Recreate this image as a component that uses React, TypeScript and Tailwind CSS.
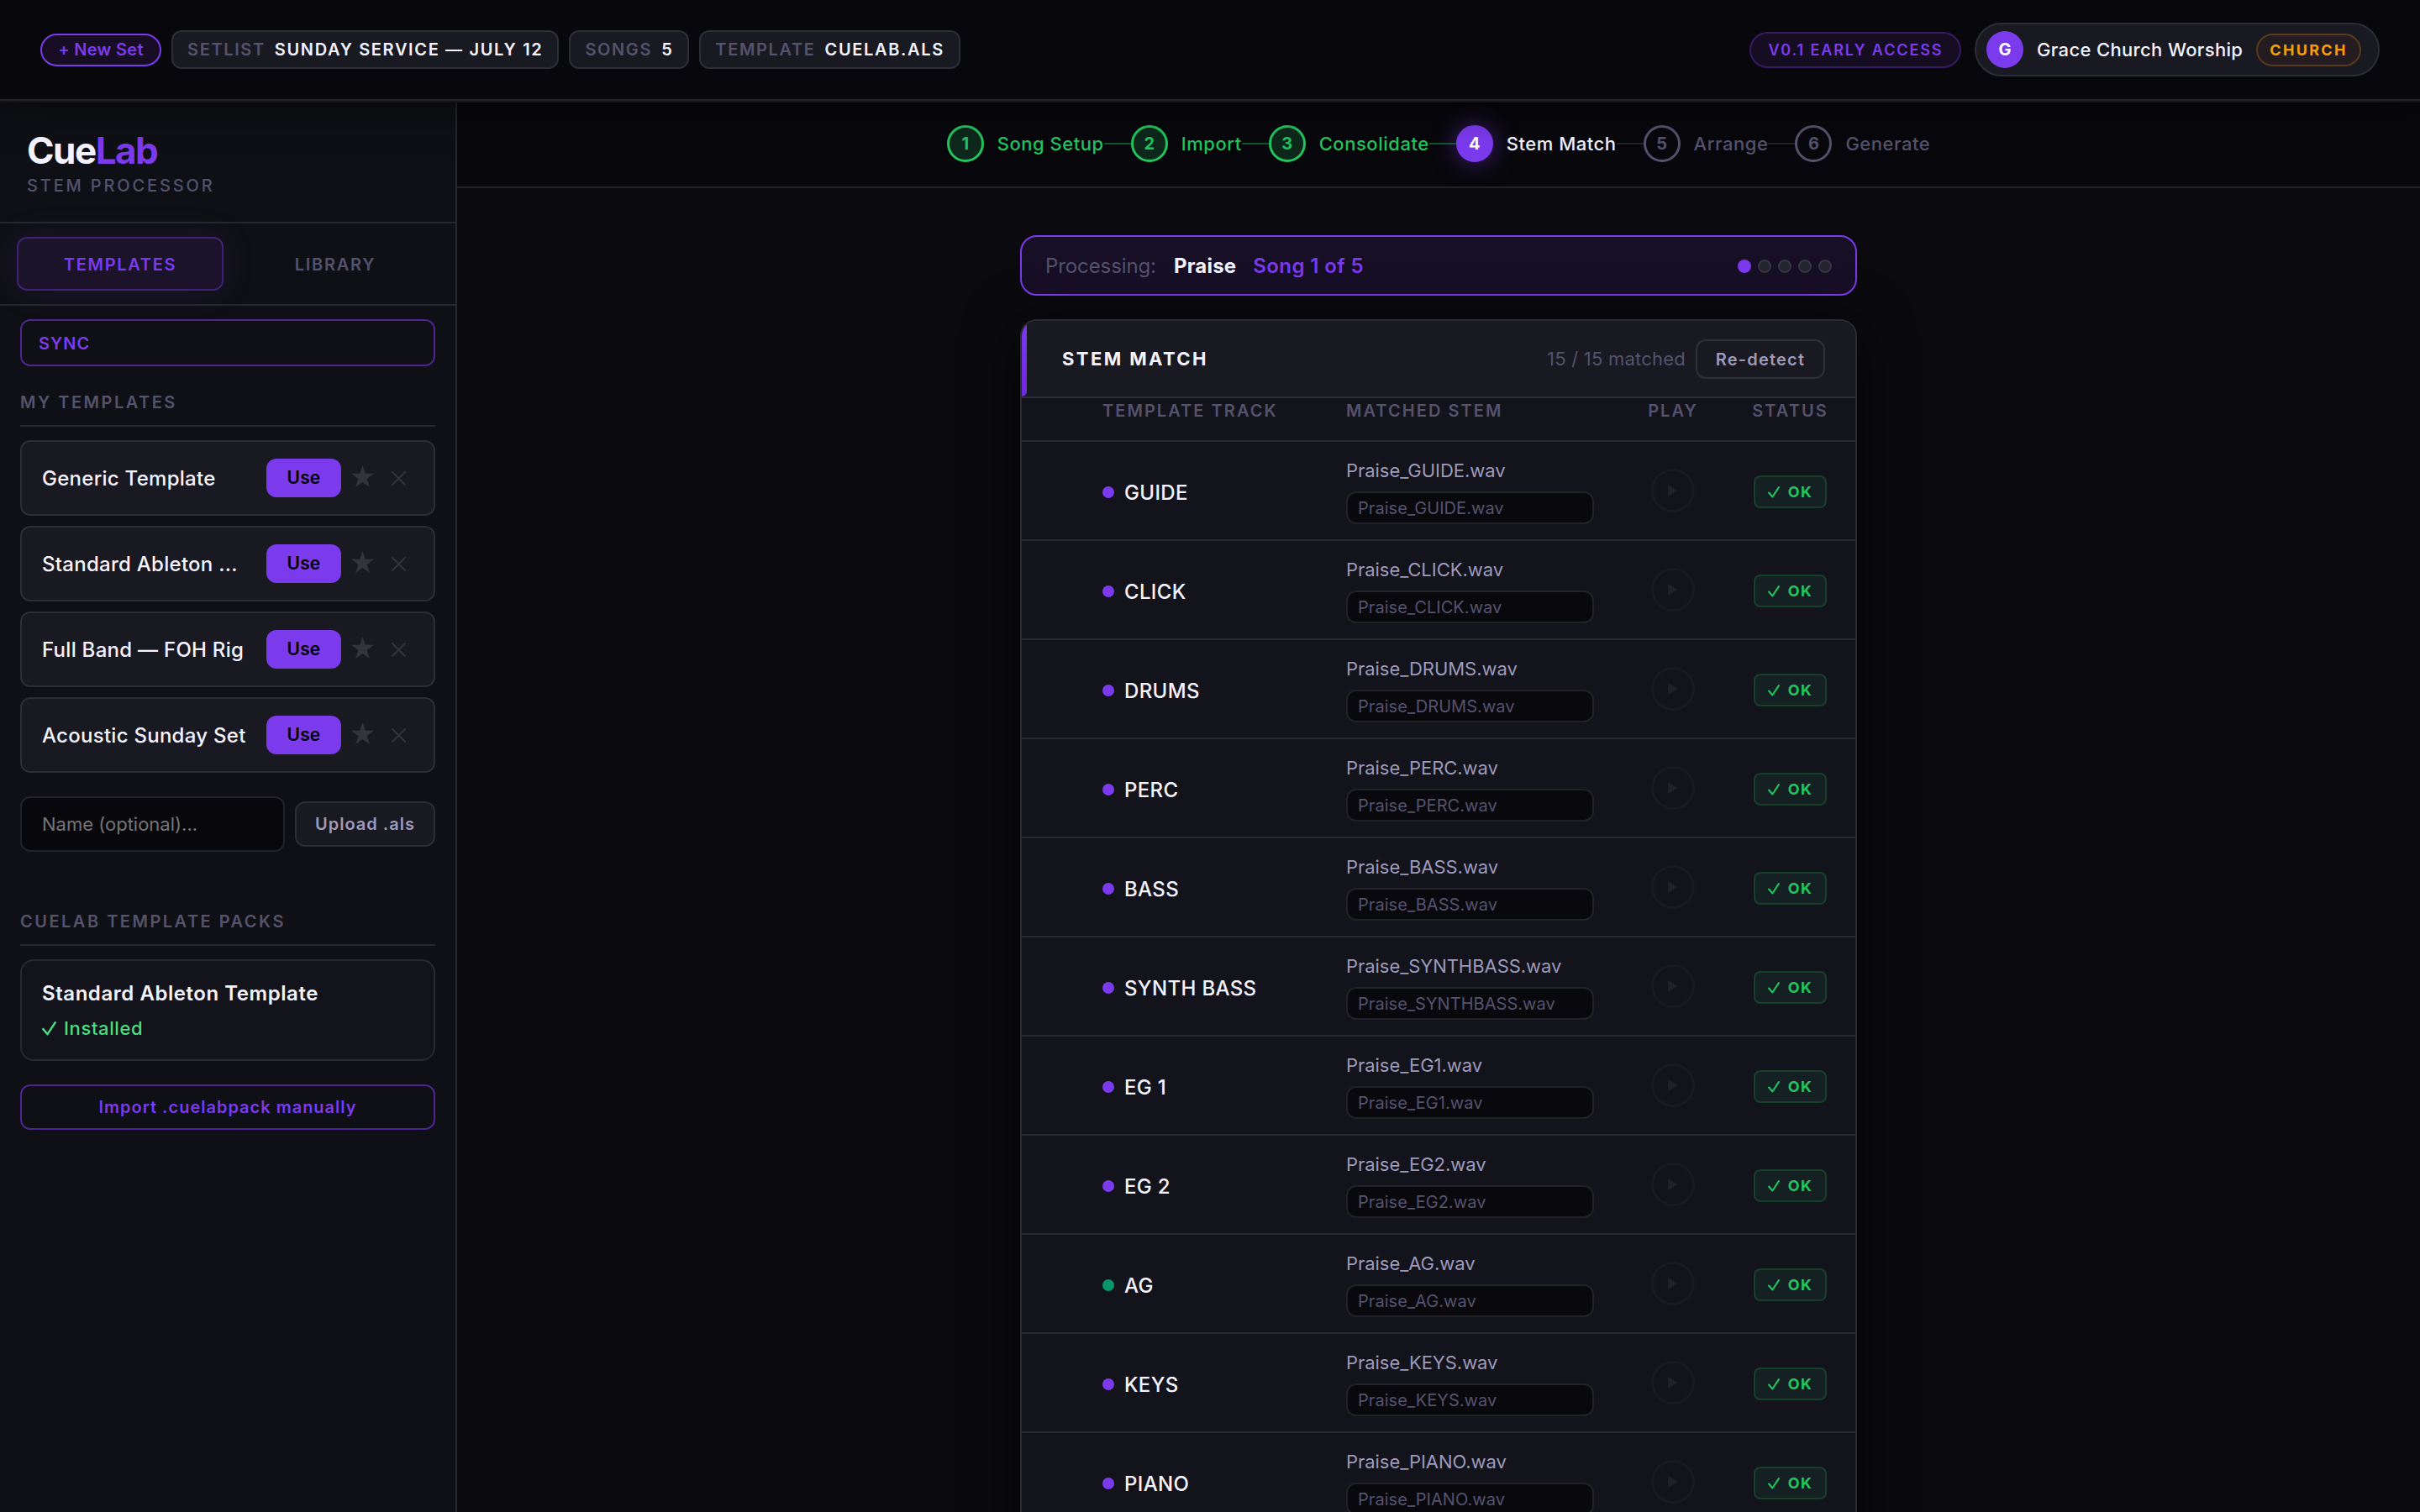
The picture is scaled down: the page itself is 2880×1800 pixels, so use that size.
import { useState } from 'react'
import clsx from 'clsx'

const steps = ['Song Setup', 'Import', 'Consolidate', 'Stem Match', 'Arrange', 'Generate']

const templates = ['Generic Template', 'Standard Ableton ...', 'Full Band — FOH Rig', 'Acoustic Sunday Set']

const tracks = [
  { name: 'GUIDE', file: 'Praise_GUIDE.wav' },
  { name: 'CLICK', file: 'Praise_CLICK.wav' },
  { name: 'DRUMS', file: 'Praise_DRUMS.wav' },
  { name: 'PERC', file: 'Praise_PERC.wav' },
  { name: 'BASS', file: 'Praise_BASS.wav' },
  { name: 'SYNTH BASS', file: 'Praise_SYNTHBASS.wav' },
  { name: 'EG 1', file: 'Praise_EG1.wav' },
  { name: 'EG 2', file: 'Praise_EG2.wav' },
  { name: 'AG', file: 'Praise_AG.wav', acoustic: true },
  { name: 'KEYS', file: 'Praise_KEYS.wav' },
  { name: 'PIANO', file: 'Praise_PIANO.wav' }
]

function Check({ className }: { className: string }) {
  return (
    <svg viewBox="0 0 15 15" className={className} fill="none" stroke="currentColor" strokeWidth="2.2" strokeLinecap="round" strokeLinejoin="round">
      <path d="M1.2 8 L5.8 13.4 L13.8 1.2" />
    </svg>
  )
}

function Pill({ label, value }: { label: string; value: string }) {
  return (
    <div className="flex h-[46px] items-center gap-3 rounded-xl border-2 border-[#2d2d36] bg-[#191922] px-[17px] text-[20px] leading-6 font-semibold tracking-[1.64px] whitespace-nowrap">
      <span className="text-[#55526d]">{label}</span>
      <span className="-ml-px text-[#f4f3ff]">{value}</span>
    </div>
  )
}

function Header() {
  return (
    <header className="relative z-10 flex h-[120px] shrink-0 items-center justify-between border-b-2 border-[#232327] bg-[#08080c] pr-12 pl-12 shadow-[0_2px_0_#141417,0_8px_48px_rgba(0,0,0,0.5)]">
      <div className="flex items-center gap-3">
        <button className="h-[39px] w-36 rounded-full border-2 border-[#7c3aed] bg-[#170e26] text-[20px] leading-6 font-semibold tracking-[0.3px] text-[#7c3aed]">
          + New Set
        </button>
        <Pill label="SETLIST" value="SUNDAY SERVICE — JULY 12" />
        <Pill label="SONGS" value="5" />
        <Pill label="TEMPLATE" value="CUELAB.ALS" />
      </div>
      <div className="flex items-center gap-4">
        <span className="flex h-[43px] w-[252px] items-center justify-center rounded-full border-2 border-[#351b62] bg-[#150e22] pl-[1px] text-[18px] font-semibold tracking-[1.9px] text-[#7c3aed]">
          V0.1 EARLY ACCESS
        </span>
        <div className="flex h-16 w-[482px] items-center rounded-full border-2 border-[#2d2d36] bg-[#191922] pr-5 pl-3">
          <span className="flex size-11 items-center justify-center rounded-full bg-[#7c3aed] text-[20px] font-bold text-white">G</span>
          <span className="ml-4 text-[22px] font-medium tracking-[0.35px] whitespace-nowrap text-[#f4f3ff]">Grace Church Worship</span>
          <span className="ml-auto flex h-[39px] w-[125px] items-center justify-center rounded-full border-2 border-[#583b1a] bg-[#241c20] text-[18px] font-bold tracking-[2.3px] text-[#f59e0b]">
            CHURCH
          </span>
        </div>
      </div>
    </header>
  )
}

function SectionTitle({ children }: { children: string }) {
  return (
    <h2 className="border-b-2 border-[#26272c] pb-[15px] text-[20px] leading-6 font-semibold tracking-[2.5px] text-[#55526d]">{children}</h2>
  )
}

function TemplateCard({ name }: { name: string }) {
  return (
    <div className="flex h-[90px] items-center rounded-xl border-2 border-[#2d2d36] bg-[#191922] pl-6">
      <span className="w-[250px] pt-[2px] text-[24px] font-medium tracking-[0.27px] whitespace-nowrap text-[#f4f3ff]">{name}</span>
      <button className="ml-[17px] h-[46px] w-[89px] rounded-xl bg-[#7c3aed] pb-[2px] text-[21px] leading-none font-semibold tracking-[0.2px] text-black">Use</button>
      <svg viewBox="0 0 27 26" className="mb-1 ml-[12px] h-[26px] w-[27px]" fill="#34343f">
        <path d="M13.5 0 L16.7 9.8 H27 L18.7 15.9 L21.8 26 L13.5 19.9 L5.2 26 L8.3 15.9 L0 9.8 H10.3 Z" />
      </svg>
      <svg viewBox="0 0 17 17" className="ml-[21px] size-[17px]" stroke="#34343f" strokeWidth="1.8" strokeLinecap="round">
        <path d="M1 1 L16 16 M16 1 L1 16" />
      </svg>
    </div>
  )
}

function Sidebar() {
  const [tab, setTab] = useState('TEMPLATES')

  return (
    <aside className="w-[544px] shrink-0 border-r-2 border-[#26272c] bg-[#0f1015]">
      <div className="h-[146px] border-b-2 border-[#26272c] pt-[34px] pl-8">
        <div className="text-[44px] leading-[50px] font-bold tracking-[-1.5px] text-[#f4f3ff]">
          Cue<span className="text-[#7c3aed]">Lab</span>
        </div>
        <div className="mt-[5px] text-[20px] leading-6 font-medium tracking-[2.85px] text-[#55526d]">STEM PROCESSOR</div>
      </div>

      <div className="flex h-[98px] items-center gap-[10px] border-b-2 border-[#26272c] px-5">
        {['TEMPLATES', 'LIBRARY'].map((t) => (
          <button
            key={t}
            onClick={() => setTab(t)}
            className={clsx(
              'h-16 flex-1 rounded-xl border-2 pt-[2px] text-[20px] leading-6 font-semibold tracking-[1.7px]',
              tab === t ? 'border-[#3f2274] bg-[#1a132a] text-[#7c3aed] shadow-[0_0_40px_rgba(124,58,237,0.12)]' : 'border-transparent text-[#55526d]'
            )}
          >
            {t}
          </button>
        ))}
      </div>

      <div className="flex flex-col px-6 pt-4">
        <button className="h-14 rounded-xl border-2 border-[#4c2590] pt-[2px] pl-5 text-left text-[20px] leading-6 font-semibold tracking-[1px] text-[#7c3aed]">SYNC</button>

        <div className="mt-[31px]">
          <SectionTitle>MY TEMPLATES</SectionTitle>
        </div>
        <div className="mt-4 flex flex-col gap-3">
          {templates.map((t) => <TemplateCard key={t} name={t} />)}
        </div>

        <div className="mt-7 flex items-center gap-3">
          <input
            placeholder="Name (optional)..."
            className="h-[66px] w-[315px] rounded-xl border-2 border-[#222226] bg-[#08080c] px-6 text-[22px] text-white placeholder:text-[#757575]"
          />
          <button className="h-[54px] flex-1 rounded-xl border-2 border-[#2d2d36] bg-[#191922] text-[20px] leading-6 font-semibold tracking-[1px] text-[#9d9abb]">Upload .als</button>
        </div>

        <div className="mt-[71px]">
          <SectionTitle>CUELAB TEMPLATE PACKS</SectionTitle>
        </div>
        <div className="mt-4 h-[121px] rounded-2xl border-2 border-[#292a30] bg-[#13131b] px-6 pt-[23px]">
          <div className="text-[24px] leading-8 font-semibold tracking-[0.55px] text-[#f4f3ff]">Standard Ableton Template</div>
          <div className="mt-[9px] flex items-center gap-[9px] text-[22px] leading-8 font-medium tracking-[0.6px] text-[#4ade80]">
            <Check className="size-[17px]" />
            Installed
          </div>
        </div>
        <button className="mt-7 h-[54px] rounded-xl border-2 border-[#4c2590] text-[20px] leading-6 font-semibold tracking-[1px] text-[#7c3aed]">
          Import .cuelabpack manually
        </button>
      </div>
    </aside>
  )
}

function Stepper({ current }: { current: number }) {
  return (
    <nav className="flex h-[104px] items-center justify-center border-b-2 border-[#232327] bg-[#08080c]">
      {steps.map((s, i) => (
        <div key={s} className="flex items-center">
          <span
            className={clsx(
              'flex size-11 items-center justify-center rounded-full border-[3px] text-[20px] font-bold',
              i < current && 'border-[#22c55e] bg-[#0e281c] text-[#22c55e]',
              i === current && 'border-[#7c3aed] bg-[#7c3aed] text-white shadow-[0_0_28px_rgba(124,58,237,0.5)]',
              i > current && 'border-[#55526d] text-[#55526d]'
            )}
          >
            {i + 1}
          </span>
          <span
            className={clsx(
              'ml-4 text-[22px] font-medium tracking-[0.53px] whitespace-nowrap',
              i < current && 'text-[#22c55e]',
              i === current && 'text-[#f4f3ff]',
              i > current && 'text-[#55526d]'
            )}
          >
            {s}
          </span>
          {i < steps.length - 1 && <span className={clsx('h-0.5 w-8', i < current ? 'bg-[#13542d]' : 'bg-[#232327]')} />}
        </div>
      ))}
    </nav>
  )
}

function TrackRow({ name, file, acoustic }: { name: string; file: string; acoustic?: boolean }) {
  return (
    <div className="grid h-[118px] shrink-0 grid-cols-[290px_335px_108px_1fr] items-center border-b-2 border-[#292930] pl-24">
      <div className="flex items-center gap-3 pt-1">
        <span className={clsx('size-[14px] rounded-full', acoustic ? 'bg-[#059669]' : 'bg-[#7c3aed]')} />
        <span className="pt-[2px] text-[24px] font-medium tracking-[0.35px] text-[#f4f3ff]">{name}</span>
      </div>
      <div className="pt-[1px]">
        <div className="text-[22px] leading-7 tracking-[-0.04px] text-[#9d9abb]">{file}</div>
        <div className="mt-[11px] flex h-[39px] w-[295px] items-center rounded-xl border-2 border-[#222226] bg-[#09090d] px-3 pt-[1px] text-[20px] tracking-[0.05px] text-[#55526d]">{file}</div>
      </div>
      <div className="flex justify-center">
        <button className="flex size-[52px] items-center justify-center rounded-full border-[3px] border-[#191922]">
          <svg viewBox="0 0 12 14" className="h-[14px] w-3" fill="#20202c">
            <path d="M0 0 L12 7 L0 14 Z" />
          </svg>
        </button>
      </div>
      <div className="flex justify-center pt-[3px] pl-2">
        <span className="flex h-[39px] w-[87px] items-center justify-center gap-[10px] rounded-lg border-2 border-[#17402b] bg-[#152022] text-[18px] font-bold tracking-[1.4px] text-[#22c55e]">
          <Check className="size-[14px]" />
          OK
        </span>
      </div>
    </div>
  )
}

export default function App() {
  return (
    <div className="flex h-[1800px] w-[2880px] flex-col overflow-hidden bg-[#0a0a0f] font-['Inter',sans-serif] antialiased">
      <Header />
      <div className="flex min-h-0 flex-1">
        <Sidebar />
        <main className="flex min-w-0 flex-1 flex-col">
          <Stepper current={3} />
          <div className="mx-auto flex min-h-0 w-[996px] flex-1 flex-col pt-14">
            <div className="flex h-[72px] shrink-0 items-center rounded-[20px] border-2 border-[#7c3aed] bg-[#170f26] px-7 pt-[1px] text-[24px]">
              <span className="tracking-[-0.1px] text-[#55526d]">Processing:</span>
              <span className="ml-[21px] font-bold tracking-[0.2px] text-[#f4f3ff]">Praise</span>
              <span className="ml-5 font-semibold tracking-[0.4px] text-[#7c3aed]">Song 1 of 5</span>
              <div className="ml-auto flex gap-2">
                <span className="size-4 rounded-full bg-[#7c3aed]" />
                {[2, 3, 4, 5].map((n) => <span key={n} className="size-4 rounded-full border-2 border-[#373743] bg-[#252531]" />)}
              </div>
            </div>

            <section className="mt-7 h-[1500px] shrink-0 overflow-hidden rounded-[20px] border-2 border-[#2a2a31] bg-[#13131b] shadow-[0_8px_64px_rgba(0,0,0,0.5)]">
              <div className="flex h-[92px] items-center border-b-2 border-[#2d2d36] bg-[#191922] pr-9">
                <span className="w-1.5 self-stretch rounded-br-md bg-linear-to-b from-[#7c3aed] to-[#6d28d9]" />
                <h1 className="ml-[42px] text-[22px] font-bold tracking-[2.4px] text-[#f4f3ff]">STEM MATCH</h1>
                <span className="ml-auto text-[22px] tracking-[0.22px] text-[#55526d]">15 / 15 matched</span>
                <button className="ml-3 h-[47px] w-[154px] rounded-xl border-2 border-[#2f2f39] pt-[1px] text-[20px] leading-6 font-semibold tracking-[1.2px] text-[#9d9abb]">Re-detect</button>
              </div>
              <div className="grid h-[52px] grid-cols-[290px_335px_108px_1fr] border-b-2 border-[#292930] pt-[3px] pl-24 text-[20px] leading-6 font-semibold tracking-[2.05px] text-[#55526d]">
                <span>TEMPLATE TRACK</span>
                <span>MATCHED STEM</span>
                <span className="text-center">PLAY</span>
                <span className="pl-2 text-center">STATUS</span>
              </div>
              {tracks.map((t) => <TrackRow key={t.name} {...t} />)}
            </section>
          </div>
        </main>
      </div>
    </div>
  )
}
